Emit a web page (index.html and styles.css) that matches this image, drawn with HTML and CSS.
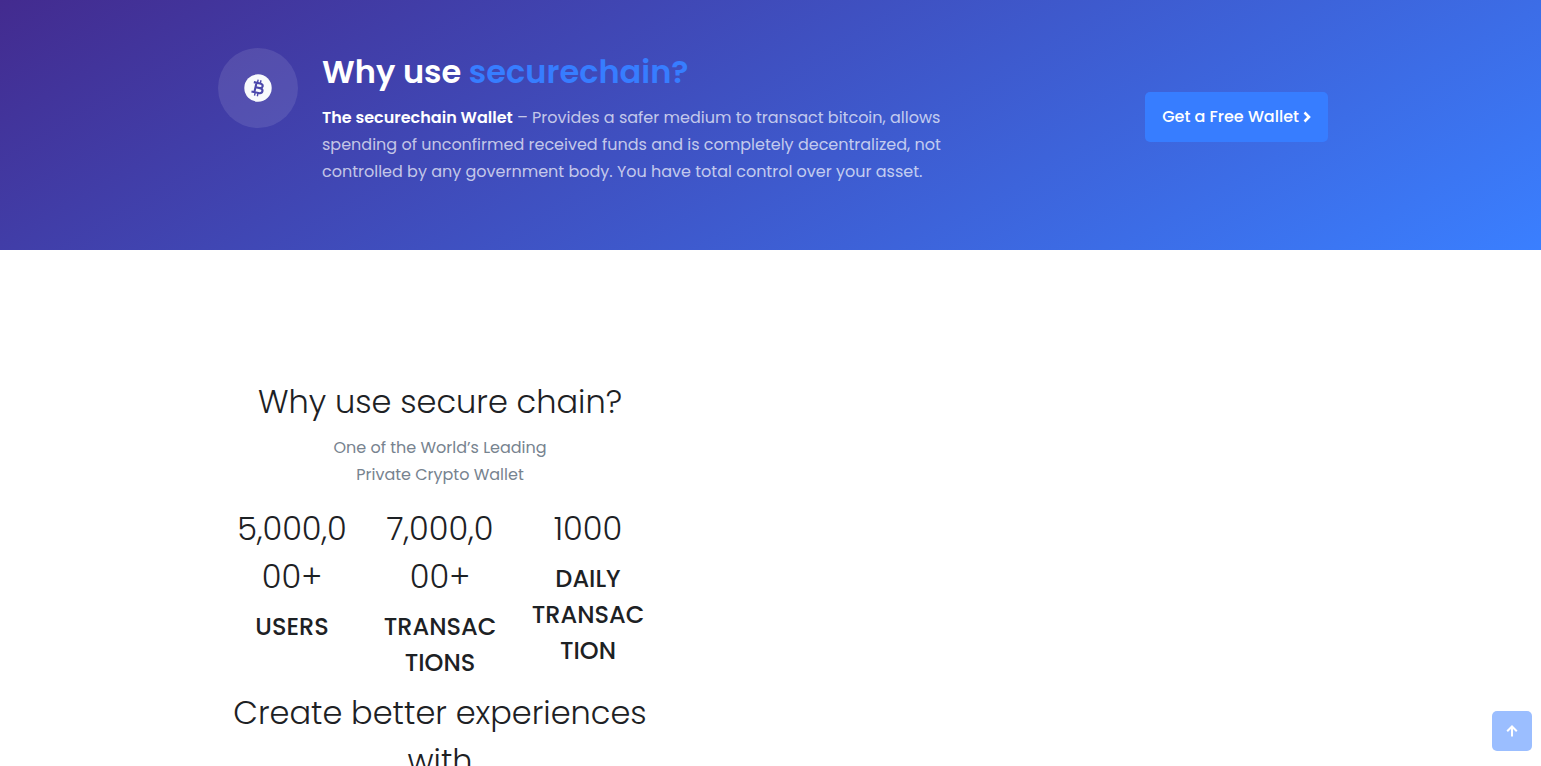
FILE: index.html
```html
<!DOCTYPE html>
<html lang="en">
  <head>
    <title>securechain</title>
    <meta charset="UTF-8">
    <meta name="viewport" content="width=device-width,initial-scale=1">
    <link rel="stylesheet" href="styles.css">
  </head>
  <body>
    <section class="cta">
      <div class="container cta-row">
        <div class="cta-icon">
          <svg viewBox="0 0 28 28" width="28" height="28" aria-hidden="true">
            <circle cx="14" cy="14" r="13.7" fill="#f8fafc"/>
            <g transform="rotate(13 14 14)" fill="none" stroke="#4b48ab">
              <path stroke-width="2.1" d="M8.6 9.2H15C19.2 9.2 19.2 13.7 15 13.7H11.6M11.6 13.7H15.6C20.2 13.7 20.2 18.8 15.6 18.8H8.4M11.4 9.2V18.8"/>
              <path stroke-width="1.4" d="M12.3 5.8V9.2M15.2 5.8V9.2M12.3 18.8V22.2M15.2 18.8V22.2"/>
            </g>
          </svg>
        </div>
        <div class="cta-text">
          <h2>Why use <span>securechain?</span></h2>
          <p><strong>The securechain Wallet</strong> – Provides a safer medium to transact bitcoin, allows<br>
            spending of unconfirmed received funds and is completely decentralized, not<br>
            controlled by any government body. You have total control over your asset.</p>
        </div>
        <a class="btn" href="#wallet">Get a Free Wallet
          <svg viewBox="0 0 8 12" width="8" height="12" aria-hidden="true"><path d="M1.5 1.5L6 6L1.5 10.5" fill="none" stroke="#fff" stroke-width="2.6"/></svg>
        </a>
      </div>
    </section>

    <section class="about">
      <div class="container">
        <div class="about-col">
          <h2 class="title">Why use secure chain?</h2>
          <p class="lead">One of the World’s Leading<br>Private Crypto Wallet</p>
          <div class="stats">
            <div class="stat">
              <div class="number">5,000,0<wbr>00+</div>
              <h4>USERS</h4>
            </div>
            <div class="stat">
              <div class="number">7,000,0<wbr>00+</div>
              <h4>TRANSAC<wbr>TIONS</h4>
            </div>
            <div class="stat">
              <div class="number">1000</div>
              <h4>DAILY TRANSAC<wbr>TION</h4>
            </div>
          </div>
          <h2 class="title">Create better experiences<br>with</h2>
        </div>
      </div>
    </section>

    <a class="back-to-top" href="#" aria-label="Back to top">
      <svg viewBox="0 0 12 12" width="12" height="12" aria-hidden="true"><path d="M6 11.5V1.8M1.2 6.3L6 1.5L10.8 6.3" fill="none" stroke="#fff" stroke-width="2"/></svg>
    </a>
  </body>
</html>
```

FILE: styles.css
```css
* {
  box-sizing: border-box;
}
body {
  margin: 0;
  height: 100vh;
  overflow: hidden;
  font-family: Poppins, Inter, sans-serif;
  font-size: 16px;
  line-height: 27px;
  color: #1d2124;
  background: #fff;
}
h2, h4, p {
  margin: 0;
}
a {
  text-decoration: none;
}
.container {
  width: 100%;
  max-width: 1115px;
  margin: 0 auto;
  padding-left: 5px;
}

/* call to action */
.cta {
  padding: 48px 0 65px;
  background: linear-gradient(150deg, #432b8f, #3a7fff);
}
.cta-row {
  display: flex;
  align-items: flex-start;
}
.cta-icon {
  display: flex;
  align-items: center;
  justify-content: center;
  flex: none;
  width: 80px;
  height: 80px;
  margin-right: 24px;
  border-radius: 50%;
  background: rgba(255, 255, 255, 0.1);
}
.cta-text {
  flex: 1;
}
.cta-text h2 {
  margin-bottom: 8px;
  font-size: 32px;
  font-weight: 600;
  line-height: 48px;
  color: #fff;
}
.cta-text h2 span {
  color: #377dff;
}
.cta-text p {
  color: rgba(255, 255, 255, 0.7);
}
.cta-text strong {
  font-weight: 600;
  color: #fff;
}
.btn {
  display: flex;
  align-items: center;
  justify-content: center;
  align-self: center;
  gap: 4px;
  height: 50px;
  padding: 0 17px;
  border-radius: 5px;
  font-weight: 500;
  color: #fff;
  background: #377dff;
}

/* figures */
.about {
  padding-top: 128px;
}
.about-col {
  width: 40%;
  text-align: center;
}
.title {
  font-size: 32px;
  font-weight: 300;
  line-height: 48px;
}
.lead {
  margin: 8px 0 17px;
  color: #77838f;
}
.stats {
  display: grid;
  grid-template-columns: repeat(3, 1fr);
  margin-bottom: 8px;
}
.stat {
  padding: 0 15px;
}
.number {
  margin-bottom: 8px;
  font-size: 32px;
  font-weight: 300;
  line-height: 48px;
}
.stat h4 {
  font-size: 24px;
  font-weight: 500;
  line-height: 36px;
}

.back-to-top {
  position: fixed;
  right: 9px;
  bottom: 15px;
  display: flex;
  align-items: center;
  justify-content: center;
  width: 40px;
  height: 40px;
  border-radius: 5px;
  background: #9bbeff;
}
```
